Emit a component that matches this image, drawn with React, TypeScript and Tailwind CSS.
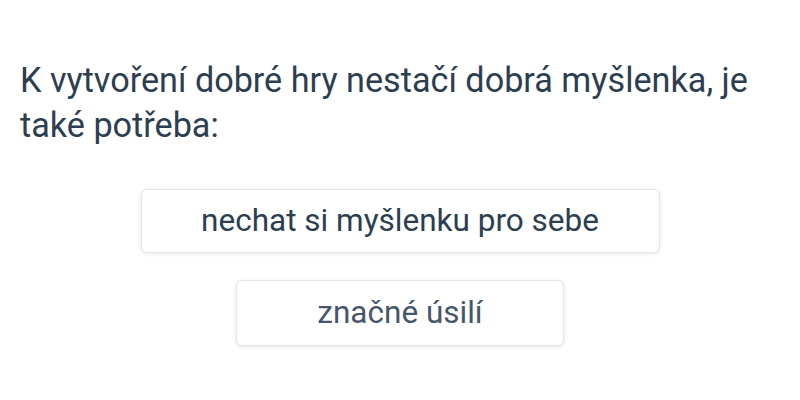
import React from 'react';

const options = [
  { label: 'nechat si myšlenku pro sebe', width: 'w-[519px]', height: 'h-[64px]', color: 'text-[#2c3e50]' },
  { label: 'značné úsilí', width: 'w-[328px]', height: 'h-[66px]', color: 'text-[#475669]' },
];

const App: React.FC = () => {
  return (
    <div className="w-[800px] h-[400px] bg-white font-['Roboto',sans-serif] overflow-hidden">
      <div className="pt-[58px] pl-[20px] pr-[20px]">
        <p className="text-[34.2px] leading-[45px] text-[#2c3e50]">
          K vytvoření dobré hry nestačí dobrá myšlenka, je také potřeba:
        </p>
      </div>

      <div className="flex flex-col items-center gap-[27px] mt-[41px]">
        {options.map((o) => (
          <button
            key={o.label}
            className={`${o.width} ${o.height} ${o.color} bg-white border border-[#e2e5e9] rounded-md shadow-[0_1px_4px_rgba(0,0,0,0.1)] text-[31.5px]`}
          >
            {o.label}
          </button>
        ))}
      </div>
    </div>
  );
};

export default App;
